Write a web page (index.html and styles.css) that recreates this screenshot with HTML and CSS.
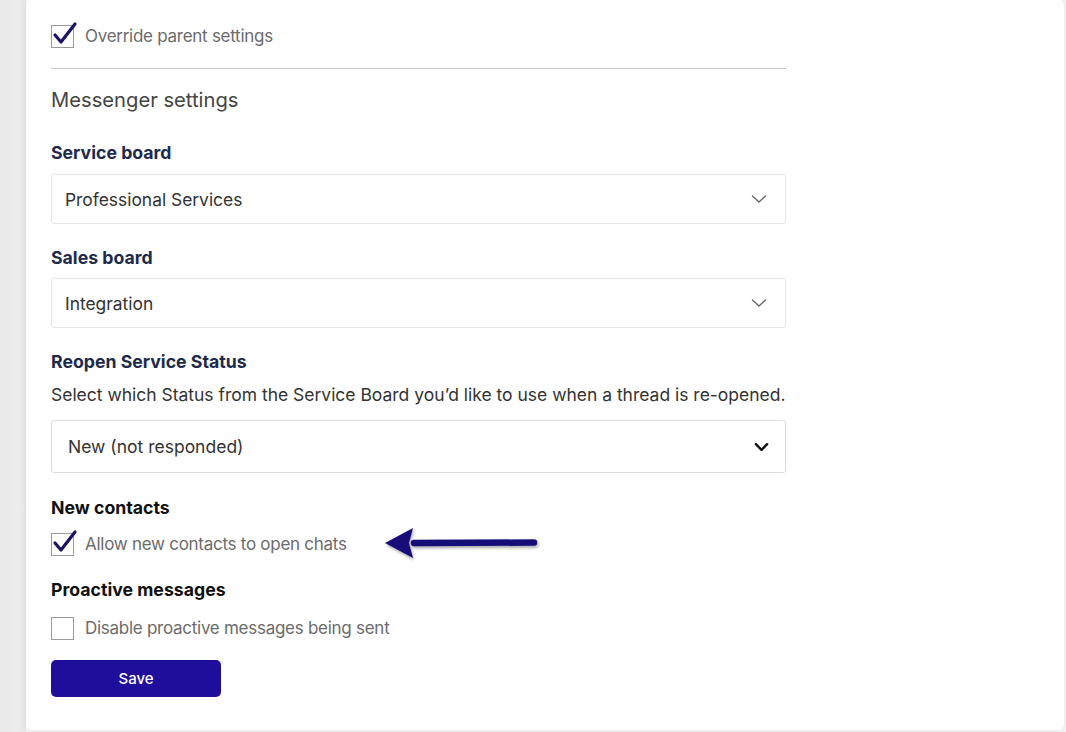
FILE: index.html
```html
<!DOCTYPE html>
<html>
<head>
<meta charset="utf-8">
<link rel="stylesheet" href="styles.css">
</head>
<body>
<div class="page">
  <div class="side"></div>
  <div class="card">
    <div class="form">
      <label class="check-row first">
        <span class="box checked">
          <svg class="tick" viewBox="0 0 30 30" width="30" height="30"><path d="M4 15 L10 22 L24 4" fill="none" stroke="#1b1464" stroke-width="3.2" stroke-linecap="round" stroke-linejoin="round"/></svg>
        </span>
        <span class="check-label">Override parent settings</span>
      </label>
      <hr class="divider">
      <h2 class="section-title">Messenger settings</h2>

      <div class="field-label navy">Service board</div>
      <div class="select">
        <span>Professional Services</span>
        <svg class="chev" viewBox="0 0 16 10" width="16" height="10"><path d="M1.5 2 L8 8 L14.5 2" fill="none" stroke="#666" stroke-width="1.4" stroke-linecap="round" stroke-linejoin="round"/></svg>
      </div>

      <div class="field-label navy gap-a">Sales board</div>
      <div class="select sales">
        <span>Integration</span>
        <svg class="chev" viewBox="0 0 16 10" width="16" height="10"><path d="M1.5 2 L8 8 L14.5 2" fill="none" stroke="#666" stroke-width="1.4" stroke-linecap="round" stroke-linejoin="round"/></svg>
      </div>

      <div class="field-label navy gap-b">Reopen Service Status</div>
      <p class="desc">Select which Status from the Service Board you’d like to use when a thread is re-opened.</p>
      <div class="select tall">
        <span>New (not responded)</span>
        <svg class="chev bold" viewBox="0 0 16 10" width="15" height="10"><path d="M2 2 L8 8 L14 2" fill="none" stroke="#111" stroke-width="2.6" stroke-linecap="round" stroke-linejoin="round"/></svg>
      </div>

      <div class="field-label black gap2">New contacts</div>
      <label class="check-row sub">
        <span class="box checked">
          <svg class="tick" viewBox="0 0 30 30" width="30" height="30"><path d="M4 15 L10 22 L24 4" fill="none" stroke="#1b1464" stroke-width="3.2" stroke-linecap="round" stroke-linejoin="round"/></svg>
        </span>
        <span class="check-label">Allow new contacts to open chats</span>
        <svg class="arrow" viewBox="0 0 180 44" width="180" height="44">
          <defs>
            <filter id="sh" x="-10%" y="-40%" width="130%" height="200%">
              <feDropShadow dx="1" dy="2" stdDeviation="1.6" flood-color="#000" flood-opacity="0.35"/>
            </filter>
          </defs>
          <g filter="url(#sh)">
            <path d="M40 21 L160 20.5" stroke="#170f78" stroke-width="6.5" stroke-linecap="round" fill="none"/>
            <path d="M11 21 L39 6 L35 21 L39 36 Z" fill="#170f78"/>
          </g>
        </svg>
      </label>

      <div class="field-label black gap3">Proactive messages</div>
      <label class="check-row sub2">
        <span class="box"></span>
        <span class="check-label">Disable proactive messages being sent</span>
      </label>

      <button class="save">Save</button>
    </div>
  </div>
</div>
</body>
</html>
```

FILE: styles.css
```css
* { box-sizing: border-box; }
html, body { margin: 0; padding: 0; height: 100%; }
body {
  font-family: Inter, "Noto Sans", "Liberation Sans", sans-serif;
  background: #f2f2f2;
  overflow: hidden;
}
.page {
  display: flex;
  height: 732px;
  width: 1066px;
}
.side {
  width: 26px;
  flex: none;
  background: linear-gradient(to right, #e9e9e9, #ededed 70%, #e4e4e4);
}
.card {
  flex: 1;
  margin-right: 2px;
  margin-bottom: 2px;
  background: #fff;
  border-radius: 5px;
  box-shadow: 0 0 2px rgba(0,0,0,0.08);
}
.form {
  width: 735px;
  margin-left: 25px;
  padding-top: 24px;
}
.check-row {
  display: flex;
  align-items: center;
  height: 24px;
  position: relative;
}
.box {
  width: 23px;
  height: 23px;
  border: 1px solid #9a9a9a;
  background: #fff;
  position: relative;
  flex: none;
}
.tick {
  position: absolute;
  left: -1px;
  top: -6px;
}
.check-label {
  margin-left: 11px;
  font-size: 17px;
  color: #6b6b6b;
  letter-spacing: -0.27px;
}
.divider {
  border: none;
  border-top: 1px solid #c8c8c8;
  margin: 20px 0 0 0;
  height: 0;
}
.section-title {
  margin: 17px 0 0 0;
  font-weight: 400;
  font-size: 20.2px;
  line-height: 28px;
  color: #444;
}
.field-label {
  font-size: 17.7px;
  line-height: 24px;
  font-weight: 700;
  margin-top: 27px;
}
.field-label.gap-a { margin-top: 22px; }
.field-label.gap-b { margin-top: 22px; }
.field-label.gap2 { margin-top: 23px; }
.field-label.gap3 { margin-top: 22px; }
.navy { color: #1e2a4c; }
.black { color: #111; }
.select {
  margin-top: 9px;
  height: 50px;
  border: 1px solid #e6e6e6;
  border-radius: 3px;
  display: flex;
  align-items: center;
  justify-content: space-between;
  padding: 0 18px 0 13px;
  font-size: 17.4px;
  color: #333;
}
.select.sales { margin-top: 8px; }
.select.tall {
  margin-top: 13px;
  height: 53px;
  border-color: #dcdcdc;
  padding-left: 16px;
  padding-right: 16px;
  font-size: 17.5px;
}
.chev { flex: none; }
.desc {
  margin: 9px 0 0 0;
  font-size: 17.5px;
  line-height: 24px;
  color: #333;
  white-space: nowrap;
  letter-spacing: -0.015px;
}
.check-row.sub { margin-top: 12px; }
.check-row.sub2 { margin-top: 14px; }
.arrow {
  position: absolute;
  left: 323px;
  top: -10px;
}
.save {
  display: block;
  margin-top: 20px;
  width: 170px;
  height: 37px;
  border: none;
  border-radius: 5px;
  background: #1f0e9b;
  color: #fff;
  font-family: Inter, "Noto Sans", sans-serif;
  font-size: 15px;
  font-weight: 500;
}
```
